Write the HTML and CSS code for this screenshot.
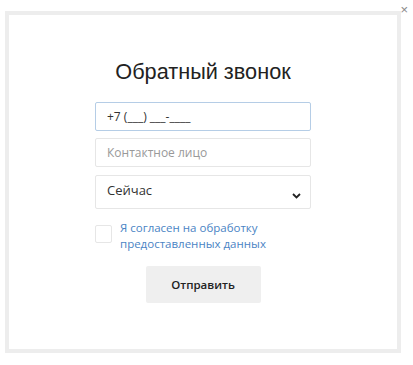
FILE: index.html
```html
<!DOCTYPE html>
<html>
<head>
    <title>Обратный звонок</title>
    <link rel="stylesheet" href="styles.css">
</head>
<body>
    <div class="popup">
        <button class="popup-close" type="button">&times;</button>
        <div class="popup-body">
            <h2 class="popup-title">Обратный звонок</h2>
            <form class="callback-form">
                <input class="field field-focus" type="text" value="+7 (___) ___-____">
                <input class="field" type="text" placeholder="Контактное лицо">
                <div class="select-wrap">
                    <select class="field field-select">
                        <option>Сейчас</option>
                    </select>
                    <svg class="select-arrow" width="9" height="6" viewBox="0 0 9 6">
                        <path d="M1 1 L4.5 4.5 L8 1" fill="none" stroke="#222" stroke-width="1.8"/>
                    </svg>
                </div>
                <label class="agree">
                    <span class="agree-box"></span>
                    <span class="agree-text">Я согласен на обработку предоставленных данных</span>
                </label>
                <button class="submit" type="button">Отправить</button>
            </form>
        </div>
    </div>
</body>
</html>
```

FILE: styles.css
```css
body {
    margin: 0;
    padding: 11px 12px 12px 5px;
    font-family: "Open Sans", Arial, sans-serif;
    background-color: #fff;
}
.popup {
    position: relative;
    border: 4px solid #ededed;
    background-color: #fff;
    box-sizing: border-box;
    height: 342px;
}
.popup-close {
    position: absolute;
    top: -10px;
    right: -11px;
    border: none;
    background: none;
    padding: 0;
    font-family: Arial, sans-serif;
    font-size: 13px;
    line-height: 10px;
    color: #888;
    cursor: pointer;
}
.popup-body {
    display: flex;
    flex-direction: column;
    align-items: center;
    padding-top: 44px;
}
.popup-title {
    margin: 0 0 17px;
    font-family: "Liberation Sans", Arial, sans-serif;
    font-size: 21.7px;
    font-weight: normal;
    line-height: 26px;
    color: #222;
}
.callback-form {
    width: 216px;
    display: flex;
    flex-direction: column;
}
.field {
    box-sizing: border-box;
    width: 100%;
    height: 29px;
    margin: 0 0 7px;
    padding: 0 11px;
    border: 1px solid #e6e6e6;
    border-radius: 2px;
    font-family: "Open Sans", Arial, sans-serif;
    font-size: 12px;
    color: #333;
    background-color: #fff;
    outline: none;
}
.field::placeholder {
    color: #999;
}
.field-focus {
    border-color: #b5cde6;
}
.select-wrap {
    position: relative;
    margin-top: 1px;
}
.field-select {
    height: 34px;
    font-size: 13px;
    appearance: none;
    -webkit-appearance: none;
    padding-bottom: 4px;
}
.select-arrow {
    position: absolute;
    right: 10px;
    top: 18px;
}
.agree {
    display: flex;
    align-items: flex-start;
    gap: 8px;
    margin-top: 4px;
    cursor: pointer;
}
.agree-box {
    flex: none;
    width: 17px;
    height: 18px;
    margin-top: 5px;
    border: 1px solid #e6e6e6;
    border-radius: 2px;
    box-sizing: border-box;
}
.agree-text {
    font-size: 11.5px;
    line-height: 16px;
    color: #4a84c4;
}
.submit {
    align-self: center;
    margin-top: 14px;
    width: 115px;
    height: 37px;
    border: none;
    border-radius: 2px;
    background-color: #efefef;
    font-family: "Open Sans", Arial, sans-serif;
    font-size: 11.5px;
    font-weight: 600;
    color: #222;
    cursor: pointer;
}
```
